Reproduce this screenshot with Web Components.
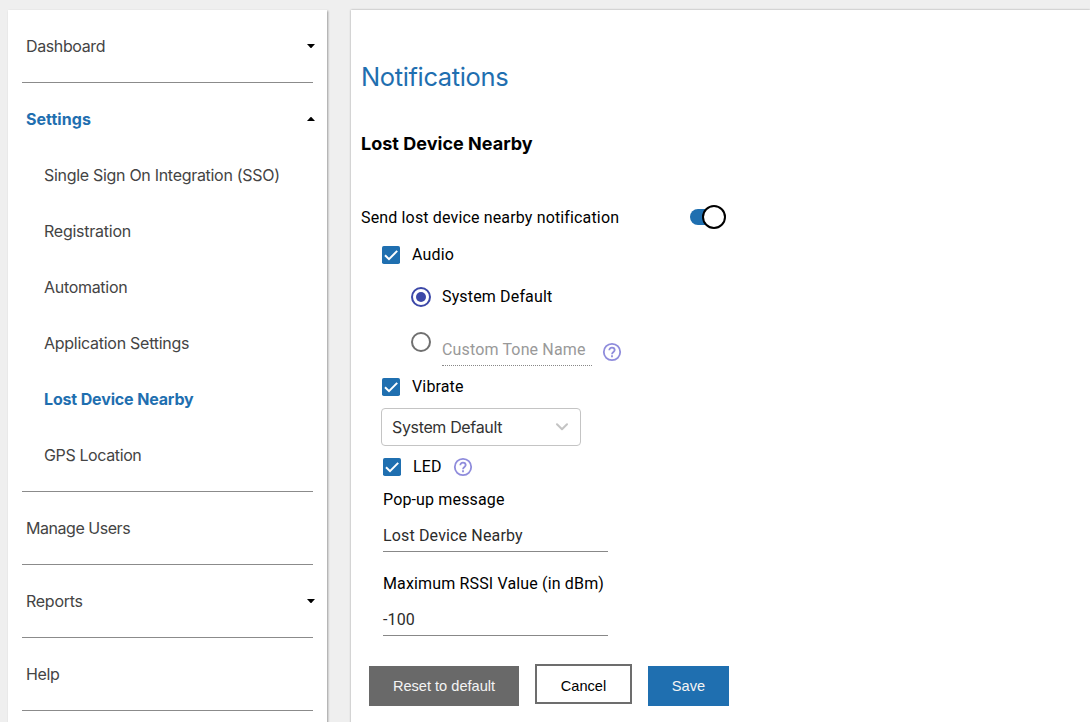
<!DOCTYPE html>
<html lang="en">
<head>
<meta charset="utf-8">
<title>Notifications</title>
<style>
html,body{margin:0;height:100%;overflow:hidden;background:#efefef}
body{font-family:Roboto,sans-serif;font-size:16px;color:#000}
</style>
</head>
<body>
<settings-app></settings-app>
<script>
const define = (name, html) => customElements.define(name, class extends HTMLElement {
  connectedCallback() {
    if (this.shadowRoot) return;
    const t = document.createElement('template');
    t.innerHTML = html;
    this.attachShadow({ mode: 'open' }).append(t.content.cloneNode(true));
  }
});

define('caret-icon', `<style>
:host{display:block;width:8px;height:4px}
:host([up]){transform:rotate(180deg)}
svg{display:block}
</style><svg width="8" height="4" viewBox="0 0 8 4"><path d="M0 0H8L4.6 3.7Q4 4.2 3.4 3.7Z"/></svg>`);

define('nav-item', `<style>
:host{display:flex;align-items:center;justify-content:space-between;height:56px;padding:0 12px 0 18px;
font:16px/20px Inter,sans-serif;color:#444;letter-spacing:var(--ls,0)}
:host([sub]){padding-left:36px}
:host([active]){color:#1f6fb0;font-weight:700}
</style><span><slot></slot></span><slot name="caret"></slot>`);

define('nav-group', `<style>
:host{display:block;padding:8px 0}
hr{border:0;height:1px;background:#8b8b8b;margin:8px 14px -9px}
</style><slot></slot><hr>`);

define('side-nav', `<style>
:host{display:block;width:319px;box-sizing:border-box;background:#fff;box-shadow:1px 1px 2px rgba(0,0,0,.35)}
nav{display:flex;flex-direction:column;gap:1px}
</style><nav>
<nav-group><nav-item style="--ls:-.38px">Dashboard<caret-icon slot="caret"></caret-icon></nav-item></nav-group>
<nav-group>
<nav-item active style="--ls:.05px">Settings<caret-icon slot="caret" up></caret-icon></nav-item>
<nav-item sub style="--ls:-.3px">Single Sign On Integration (SSO)</nav-item>
<nav-item sub style="--ls:-.25px">Registration</nav-item>
<nav-item sub style="--ls:-.3px">Automation</nav-item>
<nav-item sub style="--ls:-.27px">Application Settings</nav-item>
<nav-item sub active style="--ls:-.15px">Lost Device Nearby</nav-item>
<nav-item sub style="--ls:-.38px">GPS Location</nav-item>
</nav-group>
<nav-group><nav-item style="--ls:-.46px">Manage Users</nav-item></nav-group>
<nav-group><nav-item style="--ls:-.27px">Reports<caret-icon slot="caret"></caret-icon></nav-item></nav-group>
<nav-group><nav-item style="--ls:-.33px">Help</nav-item></nav-group>
</nav>`);

define('help-icon', `<style>:host{display:block;width:20px;height:20px}svg{display:block}</style>
<svg width="20" height="20" viewBox="0 0 20 20" fill="none" stroke="#8f8cdc" stroke-width="1.8"><circle cx="10" cy="10" r="8.2"/><path d="M7.3 8.2A2.7 2.6 0 0 1 12.7 8.1C12.7 9.9 10 10.1 10 12.3"/><path d="M9.1 14.3h1.8" stroke-width="1.9"/></svg>`);

define('check-box', `<style>
:host{display:flex;align-items:center;gap:12px;height:24px;font:16px/20px Roboto,sans-serif;letter-spacing:.15px}
svg{display:block}
</style><svg width="18" height="18" viewBox="0 0 18 18"><rect width="18" height="18" rx="1.8" fill="#1f6fb0"/><path d="M3 9.2L7 13.2L15.2 4.9" fill="none" stroke="#fff" stroke-width="2"/></svg><span><slot></slot></span>`);

define('radio-button', `<style>
:host{display:block;width:20px;height:20px;box-sizing:border-box;border:2px solid #707070;border-radius:50%}
:host([checked]){border-color:#3c48a8}
:host([checked]) i{display:block;width:10px;height:10px;margin:3px;border-radius:50%;background:#3c48a8}
</style><i></i>`);

define('toggle-switch', `<style>
:host{display:flex;align-items:center;width:36px;height:24px}
i{width:24px;height:16px;border-radius:8px;background:#1f6fb0}
b{width:24px;height:24px;box-sizing:border-box;border:2px solid #000;border-radius:50%;background:#fff;margin-left:-12px}
</style><i></i><b></b>`);

define('select-box', `<style>
:host{display:flex;align-items:center;justify-content:space-between;box-sizing:border-box;width:200px;height:38px;border:1px solid #c4c4c4;border-radius:4px;padding:0 11px 0 10px;
font:16px/20px Inter,sans-serif;color:#333;letter-spacing:-.35px}
svg{display:block}
</style><span><slot></slot></span><svg width="14" height="8" viewBox="0 0 14 8"><path d="M2 1.3L7 6.2L12 1.3" fill="none" stroke="#c4c4c4" stroke-width="2" stroke-linecap="round" stroke-linejoin="round"/></svg>`);

define('text-field', `<style>
:host{display:block;width:225px;font:16px/20px Roboto,sans-serif;letter-spacing:.15px}
label,span{display:block}
span{color:#2c2c2c;margin-top:16px;padding-bottom:5px;border-bottom:1px solid #888}
</style><label><slot name="label"></slot></label><span><slot></slot></span>`);

define('action-button', `<style>
:host{display:flex;align-items:center;justify-content:center;box-sizing:border-box;height:40px;width:var(--w);font:14.6px/20px "Liberation Sans",Arial,sans-serif;background:#696969;color:#f4f4f4}
:host([primary]){background:#1f6fb0}
:host([outline]){background:#fff;color:#000;border:2px solid #6d6d6d;margin-top:-2px;padding-top:3px}
</style><span><slot></slot></span>`);

define('notification-form', `<style>
:host{display:block;flex:1;box-sizing:border-box;background:#fff;padding:47px 0 0 10px;box-shadow:0 0 2px rgba(0,0,0,.35)}
h1{margin:0;font:400 25.5px/40px Inter,sans-serif;color:#1f6fb0;letter-spacing:-.37px}
h2{margin:35px 0 0;font:700 18px/24px Inter,sans-serif;letter-spacing:.02px}
.row{display:flex;align-items:center;letter-spacing:.15px}
.send{width:365px;justify-content:space-between;height:24px;margin-top:49px}
.audio{margin:14px 0 0 21px}
.r1{margin:20px 0 0 50px;gap:11px;height:20px}
.r1 span{line-height:20px;padding-bottom:1px}
.r2{margin:25px 0 0 50px;gap:11px;height:34px;align-items:flex-start}
.tone{box-sizing:border-box;width:150px;height:34px;line-height:20px;padding-top:8px;color:#999;border-bottom:1px dotted #888}
.r2 help-icon{margin:10px 0 0 -1px}
.vib{margin:9px 0 0 21px}
select-box{margin:9px 0 0 20px}
.led{margin:9px 0 0 22px;gap:11px}
.f1{margin:11px 0 0 22px}
.f2{margin:22px 0 0 22px}
.buttons{display:flex;gap:16px;margin:30px 0 0 8px}
</style>
<h1>Notifications</h1>
<h2>Lost Device Nearby</h2>
<div class="row send"><span>Send lost device nearby notification</span><toggle-switch></toggle-switch></div>
<check-box class="audio">Audio</check-box>
<div class="row r1"><radio-button checked></radio-button><span>System Default</span></div>
<div class="row r2"><radio-button></radio-button><div class="tone">Custom Tone Name</div><help-icon></help-icon></div>
<check-box class="vib">Vibrate</check-box>
<select-box>System Default</select-box>
<div class="row led"><check-box>LED</check-box><help-icon></help-icon></div>
<text-field class="f1"><span slot="label">Pop-up message</span>Lost Device Nearby</text-field>
<text-field class="f2"><span slot="label">Maximum RSSI Value (in dBm)</span>-100</text-field>
<div class="buttons"><action-button style="--w:150px">Reset to default</action-button><action-button outline style="--w:97px">Cancel</action-button><action-button primary style="--w:81px">Save</action-button></div>`);

define('settings-app', `<style>
:host{display:flex;gap:24px;box-sizing:border-box;height:740px;padding:10px 0 0 8px}
</style><side-nav></side-nav><notification-form></notification-form>`);
</script>
</body>
</html>
